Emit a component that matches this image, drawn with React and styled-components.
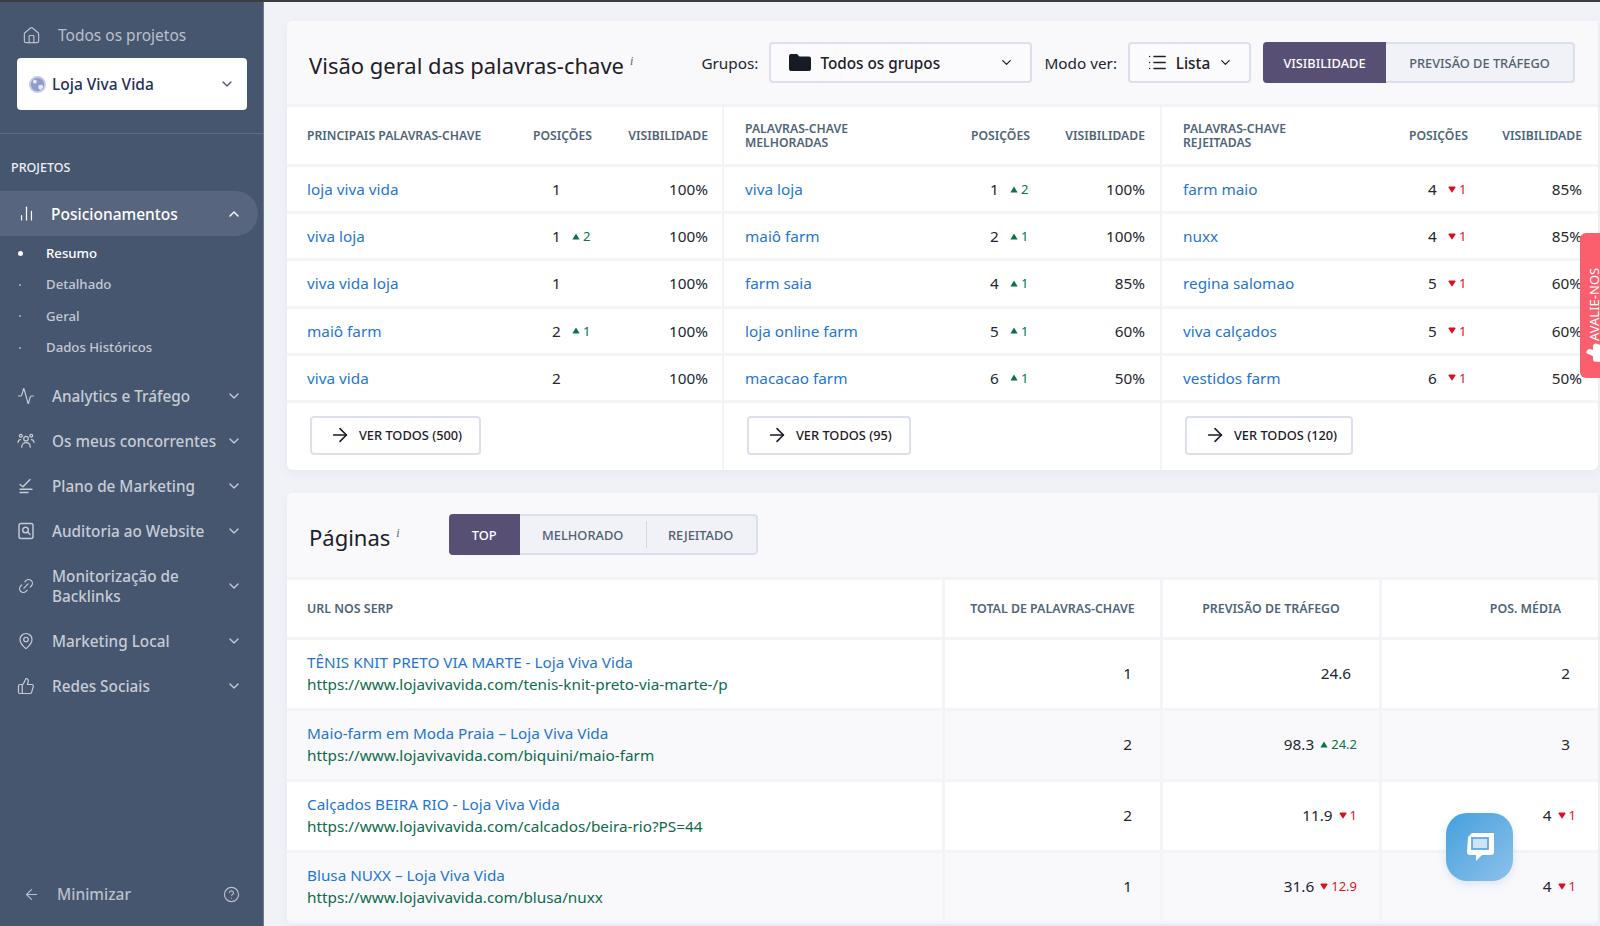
import React from "react";
import styled, { createGlobalStyle } from "styled-components";
import { House, ChevronDown, ChevronUp, ChartNoAxesColumn, Activity, Link2, MapPin, ThumbsUp, ArrowLeft, ArrowRight, CircleHelp, List } from "lucide-react";

const Global = createGlobalStyle`
  html, body { margin: 0; padding: 0; height: 100%; overflow: hidden; }
  body { font-family: "Noto Sans", "Liberation Sans", sans-serif; background: #f1f2f7; color: #23262f; }
  * { box-sizing: border-box; }
`;
const Page = styled.div`
  position: relative; display: grid; grid-template-columns: 264px 1fr; height: 926px; overflow: hidden;
  border-top: 2px solid #3a3d42;
`;
const Side = styled.aside`
  background: #47566f; display: flex; flex-direction: column; color: #c9ced8; height: 924px; position: relative;
  border-right: 1px solid #6d7a90;
`;
const Top = styled.div`
  display: flex; align-items: center; height: 40px; margin-top: 13px; padding-left: 22px; gap: 17px; font-size: 15.5px; color: #b9c0cc;
`;
const Select = styled.div`
  margin: 3px 16px 0 17px; height: 52px; background: #fff; border-radius: 4px; display: flex; align-items: center;
  padding: 0 12px; color: #1f2f5c; font-size: 15.5px; font-weight: 500; gap: 6px;
  span { flex: 1; }
`;
const Globe = styled.svg` width: 17px; height: 17px; flex: none; `;
const Divider = styled.div` height: 1px; background: #5d6c85; margin-top: 23px; `;
const SideLabel = styled.div` font-size: 12.5px; font-weight: 500; color: #eceff4; padding-left: 11px; margin-top: 26px; line-height: 16px; `;
const Active = styled.div`
  margin: 15px 5px 0 0; height: 45px; background: #57667e; border-radius: 0 23px 23px 0; display: flex; align-items: center;
  padding: 0 16px 0 18px; color: #fff; font-size: 15.5px; font-weight: 500;
  span { flex: 1; margin-left: 16px; }
`;
const Subs = styled.div` display: flex; flex-direction: column; margin: 2px 0 10px; `;
const Sub = styled.div`
  height: 31.4px; display: flex; align-items: center; padding-left: 46px; font-size: 13.2px; position: relative; line-height: 1;
  font-weight: 500; color: ${p => (p.$on ? "#fff" : "#c3c9d4")};
  &::before { content: ""; position: absolute; left: ${p => (p.$on ? 18 : 19)}px; top: 50%; margin-top: -${p => (p.$on ? 2.5 : 1)}px;
    width: ${p => (p.$on ? 5 : 2)}px; height: ${p => (p.$on ? 5 : 2)}px; border-radius: 50%; background: ${p => (p.$on ? "#fff" : "#aeb6c4")}; }
`;
const Item = styled.div`
  display: flex; align-items: center; height: ${p => (p.$tall ? 65 : 45)}px; padding: 0 21px 0 17px; font-size: 15.3px; font-weight: 500; color: #c6ccd6; line-height: 20.5px;
  span { flex: 1; margin-left: 17px; }
`;
const IconSlot = styled.div` width: 18px; height: 18px; display: flex; align-items: center; justify-content: center; flex: none; `;
const Foot = styled.div`
  margin-top: auto; height: 40px; margin-bottom: 12px; display: flex; align-items: center; padding: 0 23px; font-size: 15.5px; color: #b9c0cc; font-weight: 500;
  span { flex: 1; margin-left: 17px; }
`;
const Main = styled.main` padding: 19px 2px 0 23px; display: flex; flex-direction: column; gap: 23px; min-width: 0; `;
const Card = styled.section` background: #fff; border-radius: 6px 0 6px 6px; box-shadow: 0 3px 10px rgba(120,125,160,.08); flex: none; overflow: hidden; `;
const Band = styled.div`
  background: #f9f9fc; display: flex; align-items: center; padding: 0 23px 0 22px; height: ${p => p.$h}px; border-bottom: 3px solid #f3f4f8;
`;
const Title = styled.h2`
  margin: 0; font-size: 22px; font-weight: 400; color: #1d2028; line-height: 30px;
  i { font-size: 12px; color: #4f6577; vertical-align: 9px; margin-left: 6px; font-family: "Liberation Serif", serif; }
`;
const Controls = styled.div` margin-left: auto; display: flex; align-items: center; `;
const Lbl = styled.span` font-size: 15.3px; color: #23262f; margin-right: 11px; `;
const Drop = styled.div`
  height: 41px; width: ${p => p.$w}px; border: 2px solid #dcdfec; border-radius: 4px; background: #fbfbfd; display: flex; align-items: center;
  padding: 0 16px 0 17px; font-size: 15.3px; font-weight: 500; color: #1d2028; margin-right: ${p => p.$mr}px; gap: ${p => p.$g}px;
  span { flex: 1; }
`;
const Toggle = styled.div`
  display: flex; height: 41px; border: 2px solid #dcdfec; border-radius: 4px; background: #f1f2f7; margin-left: ${p => p.$ml || 0}px;
`;
const ToggleBtn = styled.div`
  width: ${p => p.$w}px; margin: ${p => (p.$on ? "-2px 0 -2px -2px" : "0")}; display: flex; align-items: center; justify-content: center; font-size: 12.8px; font-weight: 500; position: relative;
  background: ${p => (p.$on ? "#585074" : "transparent")}; color: ${p => (p.$on ? "#fff" : "#4f6070")};
  border-radius: ${p => (p.$on ? "4px 0 0 4px" : "0")};
  ${p => p.$sep && `&::before { content: ""; position: absolute; left: 0; top: 5px; bottom: 5px; width: 1px; background: #d5d8e4; }`}
`;
const Cols = styled.div` display: grid; grid-template-columns: 435px 438px 438px; `;
const Col = styled.div` & + & { border-left: 2px solid #f3f4f8; } `;
const KRow = styled.div`
  display: grid; grid-template-columns: 226px 63px 1fr; align-items: center; padding: 0 ${p => p.$pr}px 0 ${p => p.$pl}px; height: 47.2px;
  border-bottom: 3px solid #f4f5f9; font-size: 15.3px;
`;
const KHead = styled(KRow)` height: 60px; color: #4f6577; font-size: 12.2px; font-weight: 600; line-height: 14px; `;
const KLink = styled.a` color: #1f76cf; text-decoration: none; `;
const Pos = styled.div` display: flex; align-items: center; padding-left: 19px; gap: 0; white-space: nowrap; `;
const PosNum = styled.span` display: inline-block; min-width: 11px; `;
const Vis = styled.div` text-align: right; `;
const Delta = styled.span`
  display: inline-flex; align-items: center; gap: 3px; font-size: 13px; margin-left: ${p => p.$ml ?? 9}px;
  color: ${p => (p.$up ? "#0c7048" : "#e3101f")};
  svg { width: 8px; height: 7px; flex: none; }
`;
const BtnRow = styled.div` height: 67px; padding: 13px 0 0 ${p => p.$pl}px; `;
const Btn = styled.div`
  width: ${p => p.$w}px; height: 39px; border: 2px solid #dcdfec; border-radius: 4px; background: #fff; display: flex; align-items: center; padding-left: 17px; gap: 8px;
  font-size: 12.8px; font-weight: 500; color: #1d2028;
`;
const TRow = styled.div`
  display: grid; grid-template-columns: 655px 218px 219px 219px; height: ${p => p.$h}px; background: ${p => (p.$alt ? "#f9f9fc" : "#fff")};
  border-bottom: 3px solid #f3f4f8;
`;
const Cell = styled.div`
  display: flex; flex-direction: column; justify-content: center; font-size: 15.3px; line-height: 21.5px; padding: 0 22px 0 20px;
  & + & { border-left: 3px solid #f3f4f8; flex-direction: row; align-items: center; justify-content: flex-end; }
`;
const HCell = styled.div`
  display: flex; align-items: center; justify-content: ${p => p.$j || "center"}; font-size: 12.4px; font-weight: 600; color: #4f6577; padding: ${p => p.$p || "0"};
  & + & { border-left: 3px solid #f3f4f8; }
`;
const Url = styled.div` color: #0d6b4c; `;
const Plain = styled.span` margin-right: 6px; `;
const Avalie = styled.div`
  position: absolute; right: 0; top: 231px; width: 20px; height: 145px; background: #fb5f6e; border-radius: 6px 0 0 6px; overflow: hidden; color: #fff;
`;
const AvalieText = styled.div`
  position: absolute; left: 4px; top: 18px; writing-mode: vertical-rl; transform: rotate(180deg); font-size: 13px; white-space: nowrap; line-height: 20px; height: 90px; text-align: left;
`;
const AvalieThumb = styled.div` position: absolute; left: 8px; top: 107px; color: #fff; transform: rotate(-90deg); `;
const Chat = styled.div`
  position: absolute; left: 1446px; top: 811px; width: 67px; height: 68px; border-radius: 21px; background: linear-gradient(135deg, #469fde, #8cc2ea);
  display: flex; align-items: center; justify-content: center; box-shadow: 0 3px 10px rgba(90,150,210,.2);
`;

const Up = () => <svg viewBox="0 0 8 7"><path d="M4 .5 7.6 6.5H.4Z" fill="#0c7048" /></svg>;
const Dn = () => <svg viewBox="0 0 8 7"><path d="M.3 1.2 1.2.4h5.6l.9.8L4 6.8Z" fill="#d9101d" /></svg>;
const D = ({ up, v, ml }) => <Delta $up={up} $ml={ml}>{up ? <Up /> : <Dn />}{v}</Delta>;

const ic = { size: 18, strokeWidth: 1.6 };
const Users4 = () => (
  <svg width="19" height="18" viewBox="0 0 19 18" fill="none" stroke="currentColor" strokeWidth="1.3" strokeLinecap="round">
    <circle cx="9.5" cy="6.5" r="2.4" /><circle cx="4" cy="3.5" r="1.5" /><circle cx="15" cy="3.5" r="1.5" />
    <path d="M5 15.5c0-3 2-4.8 4.5-4.8S14 12.500 14 15.500M1 10.500c.3-1.800 1.300-3 2.800-3M18 10.500c-.3-1.800-1.300-3-2.800-3" />
  </svg>
);
const PlanIcon = () => (
  <svg width="18" height="18" viewBox="0 0 18 18" fill="none" stroke="currentColor" strokeWidth="1.4" strokeLinecap="round" strokeLinejoin="round">
    <path d="M3 7.500 6 9.800 13 2.500M3 12.200h12M3 15.500h8" />
  </svg>
);
const AuditIcon = () => (
  <svg width="18" height="18" viewBox="0 0 18 18" fill="none" stroke="currentColor" strokeWidth="1.4" strokeLinecap="round">
    <rect x="2" y="1.500" width="14" height="15" rx="2" /><circle cx="8.500" cy="8" r="2.800" /><path d="M10.500 10 13 12.500" />
  </svg>
);
const Folder = () => (
  <svg width="24" height="19" viewBox="0 0 24 19"><path d="M1 3a2 2 0 0 1 2-2h6l2.500 2.500H21a2 2 0 0 1 2 2V16a2 2 0 0 1-2 2H3a2 2 0 0 1-2-2Z" fill="#161b26" /></svg>
);

const kw = [
  { pl: 20, pr: 14, w: 171, btn: "VER TODOS (500)", bl: 23, head: "PRINCIPAIS PALAVRAS-CHAVE", rows: [
    ["loja viva vida", "1", null, "100%"], ["viva loja", "1", [1, "2"], "100%"], ["viva vida loja", "1", null, "100%"], ["maiô farm", "2", [1, "1"], "100%"], ["viva vida", "2", null, "100%"]] },
  { pl: 21, pr: 15, w: 164, btn: "VER TODOS (95)", bl: 23, head: <>PALAVRAS-CHAVE<br />MELHORADAS</>, rows: [
    ["viva loja", "1", [1, "2"], "100%"], ["maiô farm", "2", [1, "1"], "100%"], ["farm saia", "4", [1, "1"], "85%"], ["loja online farm", "5", [1, "1"], "60%"], ["macacao farm", "6", [1, "1"], "50%"]] },
  { pl: 21, pr: 16, w: 168, btn: "VER TODOS (120)", bl: 23, head: <>PALAVRAS-CHAVE<br />REJEITADAS</>, rows: [
    ["farm maio", "4", [0, "1"], "85%"], ["nuxx", "4", [0, "1"], "85%"], ["regina salomao", "5", [0, "1"], "60%"], ["viva calçados", "5", [0, "1"], "60%"], ["vestidos farm", "6", [0, "1"], "50%"]] },
];
const pages = [
  ["TÊNIS KNIT PRETO VIA MARTE - Loja Viva Vida", "https://www.lojavivavida.com/tenis-knit-preto-via-marte-/p", "1", "24.6", null, "2", null],
  ["Maio-farm em Moda Praia – Loja Viva Vida", "https://www.lojavivavida.com/biquini/maio-farm", "2", "98.3", [1, "24.2"], "3", null],
  ["Calçados BEIRA RIO - Loja Viva Vida", "https://www.lojavivavida.com/calcados/beira-rio?PS=44", "2", "11.9", [0, "1"], "4", [0, "1"]],
  ["Blusa NUXX – Loja Viva Vida", "https://www.lojavivavida.com/blusa/nuxx", "1", "31.6", [0, "12.9"], "4", [0, "1"]],
];
const nav = [
  [<Activity {...ic} />, "Analytics e Tráfego"], [<Users4 />, "Os meus concorrentes"], [<PlanIcon />, "Plano de Marketing"], [<AuditIcon />, "Auditoria ao Website"],
  [<Link2 {...ic} style={{ transform: "rotate(-45deg)" }} />, <>Monitorização de<br />Backlinks</>, true], [<MapPin {...ic} />, "Marketing Local"], [<ThumbsUp {...ic} />, "Redes Sociais"],
];
const Val = ({ v, d }) => d ? <><span>{v}</span><D up={!!d[0]} v={d[1]} ml={6} /></> : <Plain>{v}</Plain>;

export default function App() {
  return (
    <Page>
      <Global />
      <Side>
        <Top><House size={19} strokeWidth={1.5} />Todos os projetos</Top>
        <Select>
          <Globe viewBox="0 0 18 18"><circle cx="9" cy="9" r="8" fill="#8d9ccb" stroke="#c3cbe6" strokeWidth="2" /><path d="M5 4c3 0 4 1 3 3S5 8 4 7Zm5 6 4-1 1 3-3 3-2-2Z" fill="#e8ebf6" /></Globe>
          <span>Loja Viva Vida</span><ChevronDown size={16} color="#4c5a78" />
        </Select>
        <Divider />
        <SideLabel>PROJETOS</SideLabel>
        <Active><ChartNoAxesColumn size={17} strokeWidth={1.7} /><span>Posicionamentos</span><ChevronUp size={16} /></Active>
        <Subs>
          <Sub $on>Resumo</Sub><Sub>Detalhado</Sub><Sub>Geral</Sub><Sub>Dados Históricos</Sub>
        </Subs>
        {nav.map(([icon, t, tall], i) => (
          <Item key={i} $tall={tall}><IconSlot>{icon}</IconSlot><span>{t}</span><ChevronDown size={16} /></Item>
        ))}
        <Foot><ArrowLeft size={17} strokeWidth={1.6} /><span>Minimizar</span><CircleHelp size={17} strokeWidth={1.6} /></Foot>
      </Side>
      <Main>
        <Card>
          <Band $h={86}>
            <Title>Visão geral das palavras-chave<i>i</i></Title>
            <Controls>
              <Lbl>Grupos:</Lbl>
              <Drop $w={263} $mr={12} $g={8}><Folder /><span>Todos os grupos</span><ChevronDown size={15} /></Drop>
              <Lbl>Modo ver:</Lbl>
              <Drop $w={123} $mr={12} $g={8}><List size={21} strokeWidth={1.6} /><span>Lista</span><ChevronDown size={15} /></Drop>
              <Toggle><ToggleBtn $on $w={123}>VISIBILIDADE</ToggleBtn><ToggleBtn $w={187}>PREVISÃO DE TRÁFEGO</ToggleBtn></Toggle>
            </Controls>
          </Band>
          <Cols>
            {kw.map((c, ci) => (
              <Col key={ci}>
                <KHead $pl={c.pl} $pr={c.pr}><div>{c.head}</div><div>POSIÇÕES</div><Vis>VISIBILIDADE</Vis></KHead>
                {c.rows.map((r, i) => (
                  <KRow key={i} $pl={c.pl} $pr={c.pr}>
                    <KLink>{r[0]}</KLink>
                    <Pos><PosNum>{r[1]}</PosNum>{r[2] && <D up={!!r[2][0]} v={r[2][1]} />}</Pos>
                    <Vis>{r[3]}</Vis>
                  </KRow>
                ))}
                <BtnRow $pl={c.bl}><Btn $w={c.w}><ArrowRight size={22} strokeWidth={1.7} color="#161b26" />{c.btn}</Btn></BtnRow>
              </Col>
            ))}
          </Cols>
        </Card>
        <Card>
          <Band $h={87}>
            <Title>Páginas<i>i</i></Title>
            <Toggle $ml={49}>
              <ToggleBtn $on $w={71}>TOP</ToggleBtn><ToggleBtn $w={126}>MELHORADO</ToggleBtn><ToggleBtn $sep $w={110}>REJEITADO</ToggleBtn>
            </Toggle>
          </Band>
          <TRow $h={60}>
            <HCell $j="flex-start" $p="0 0 0 20px">URL NOS SERP</HCell><HCell>TOTAL DE PALAVRAS-CHAVE</HCell><HCell>PREVISÃO DE TRÁFEGO</HCell><HCell $j="flex-end" $p="0 37px 0 0">POS. MÉDIA</HCell>
          </TRow>
          {pages.map((p, i) => (
            <TRow key={i} $h={71} $alt={i % 2 === 1}>
              <Cell><KLink>{p[0]}</KLink><Url>{p[1]}</Url></Cell>
              <Cell><Plain>{p[2]}</Plain></Cell>
              <Cell><Val v={p[3]} d={p[4]} /></Cell>
              <Cell><Val v={p[5]} d={p[6]} /></Cell>
            </TRow>
          ))}
        </Card>
      </Main>
      <Avalie>
        <AvalieText>AVALIE-NOS</AvalieText>
        <AvalieThumb><ThumbsUp size={20} fill="#fff" /></AvalieThumb>
      </Avalie>
      <Chat>
        <svg width="36" height="36" viewBox="0 0 36 36"><path d="M7 8 11 4h22v19a3 3 0 0 1-3 3H21l-6 6v-6H9a3 3 0 0 1-3-3Z" fill="#fff" transform="translate(-1 0)" /><rect x="10" y="9" width="16" height="11" fill="#cfe5f6" stroke="#5fa9e0" strokeWidth="1.800" /></svg>
      </Chat>
    </Page>
  );
}
